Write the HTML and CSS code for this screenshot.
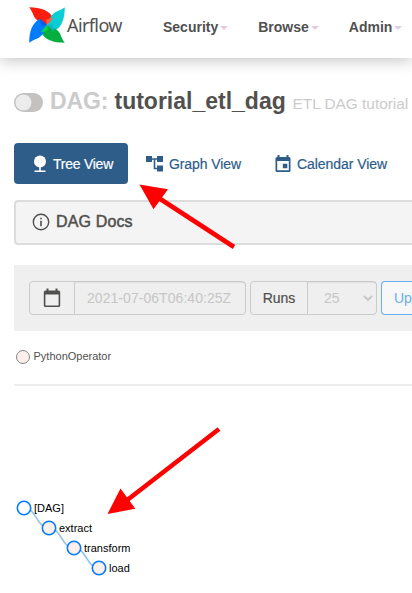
FILE: index.html
```html
<!DOCTYPE html>
<html lang="en">
<head>
<meta charset="utf-8">
<title>tutorial_etl_dag - Tree - Airflow</title>
<link rel="stylesheet" href="styles.css">
</head>
<body>
<header class="navbar">
  <a class="brand">
    <svg class="pinwheel" viewBox="0 0 36 36" width="36" height="36">
      <defs>
        <path id="blade" d="M.2.2C12 .4 20 3 24.300 11L18 18C12 15 8 14.500 5 9.500 3.500 5 1.500 2 .2.2z"/>
        <path id="fold" d="M18 18 17 13Q21 10.800 24.300 11z"/>
      </defs>
      <g fill="#ff1e0d"><use href="#blade"/></g>
      <g fill="#0bced5" transform="rotate(90 18 18)"><use href="#blade"/></g>
      <g fill="#04af40" transform="rotate(180 18 18)"><use href="#blade"/></g>
      <g fill="#017cff" transform="rotate(270 18 18)"><use href="#blade"/></g>
      <g fill="#ff6040"><use href="#fold"/></g>
      <g fill="#11b8c8" transform="rotate(90 18 18)"><use href="#fold"/></g>
      <g fill="#00d943" transform="rotate(180 18 18)"><use href="#fold"/></g>
      <g fill="#0160e8" transform="rotate(270 18 18)"><use href="#fold"/></g>
    </svg>
    <span class="brand-name">Airflow</span>
  </a>
  <nav class="menu">
    <a class="menu-item">Security<i class="caret"></i></a>
    <a class="menu-item">Browse<i class="caret"></i></a>
    <a class="menu-item">Admin<i class="caret"></i></a>
  </nav>
</header>
<main class="content">
  <div class="title-row">
    <span class="switch"></span>
    <h1 class="title"><span class="muted">DAG:</span><span class="dag-id">tutorial_etl_dag</span></h1>
    <small class="description">ETL DAG tutorial</small>
  </div>
  <div class="tabs">
    <a class="tab tab-active">
      <svg viewBox="0 0 12 18" width="12" height="18"><g fill="currentColor"><circle cx="6" cy="6.500" r="6"/><path d="M5.200 12h1.600v4H5.200zM.5 15.500h11v1.500H.5z"/></g></svg>
      <span>Tree View</span>
    </a>
    <a class="tab tab-graph">
      <svg viewBox="0 0 17 16" width="17" height="16"><path fill="currentColor" d="M0 0h6v6H0zM11 0h6v6h-6zM11 9.500h6v6h-6zM6 2.300h5v1.500H9.300v8h1.700v1.500H7.700V3.800H6z"/></svg>
      <span>Graph View</span>
    </a>
    <a class="tab tab-calendar">
      <svg viewBox="0 0 16 18" width="16" height="18"><path fill="currentColor" d="M2.500 0h2v2h7V0h2v2h.8Q15.500 2 15.500 3.500v12Q15.500 17 14 17H2Q.5 17 .5 15.500v-12Q.5 2 2 2h.5zM2.200 6v9.300h11.600V6zM7.800 8.800h4.500v4.500H7.800z" fill-rule="evenodd"/></svg>
      <span>Calendar View</span>
    </a>
  </div>
  <section class="docs">
    <svg viewBox="0 0 18 18" width="18" height="18"><circle cx="9" cy="9" r="7.700" fill="none" stroke="#51504f" stroke-width="1.400"/><path fill="#51504f" d="M8.200 4.700h1.600v1.600H8.200zM8.200 7.700h1.600v5.500H8.200z"/></svg>
    <span>DAG Docs</span>
  </section>
  <section class="filters">
    <div class="group group-date">
      <span class="addon">
        <svg viewBox="0 0 18 20" width="18" height="20"><path fill="#51504f" fill-rule="evenodd" d="M3.500.5h2v2h7v-2h2v2h1.200q1.500 0 1.500 1.500v13.500q0 1.500-1.500 1.500H2.300Q.8 19 .8 17.500V4q0-1.500 1.500-1.500h1.200zM2.400 6.500v11h13.200v-11z"/></svg>
      </span>
      <span class="field">2021-07-06T06:40:25Z</span>
    </div>
    <div class="group group-runs">
      <span class="addon">Runs</span>
      <span class="field select">25<svg viewBox="0 0 10 7" width="10" height="7"><path d="M1 1l4 4 4-4" fill="none" stroke="#c6c6c6" stroke-width="1.800"/></svg></span>
    </div>
    <span class="update">Up</span>
  </section>
  <div class="legend"><i class="legend-dot"></i><span>PythonOperator</span></div>
  <hr class="rule">
  <svg class="tree" viewBox="0 0 398 207" width="398" height="207">
    <g class="links">
      <path d="M10 122C22.500 122 22.500 142 35 142"/>
      <path d="M35 142C47.500 142 47.500 162 60 162"/>
      <path d="M60 162C72.500 162 72.500 182 85 182"/>
    </g>
    <g class="nodes">
      <circle class="root" cx="10" cy="122" r="6.700"/>
      <circle cx="35" cy="142" r="6.700"/>
      <circle cx="60" cy="162" r="6.700"/>
      <circle cx="85" cy="182" r="6.700"/>
    </g>
    <g class="labels">
      <text x="20" y="126">[DAG]</text>
      <text x="45" y="146">extract</text>
      <text x="70" y="166">transform</text>
      <text x="95" y="186">load</text>
    </g>
  </svg>
</main>
<svg class="arrows" viewBox="0 0 412 593" width="412" height="593">
  <path class="shaft" d="M234 247 158 197.500M219 429 126 501"/>
  <path class="head" d="M139.500 184.500 168 189.300 153.500 209.300zM107.500 514 120.500 488.500 135.300 508.800z"/>
</svg>
</body>
</html>
```
FILE: styles.css
```css
* { box-sizing: border-box; }
body {
  margin: 0;
  width: 412px;
  height: 593px;
  overflow: hidden;
  position: relative;
  background: #fff;
  color: #51504f;
  font: 14px/20px "Liberation Sans", Arial, sans-serif;
}
svg { flex: none; display: block; }
.navbar {
  display: flex;
  height: 58px;
  padding-left: 29px;
  box-shadow: 0 3px 14px rgba(0, 0, 0, .22);
}
.brand { display: flex; width: 134px; padding-top: 7px; }
.brand-name {
  margin: 6px 0 0 2px;
  font: 18px/24px "Noto Sans", sans-serif;
  letter-spacing: -.6px;
}
.menu { display: flex; gap: 30px; padding-top: 17px; font-weight: 700; }
.menu-item { display: flex; white-space: nowrap; }
.caret {
  margin: 9px 0 0 2px;
  height: 0;
  border: 4px solid transparent;
  border-top-color: #e3cbe6;
  border-bottom: 0;
}
.content { padding: 27px 0 0 14px; }
.title-row { display: flex; height: 34px; white-space: nowrap; }
.switch {
  flex: none;
  width: 29px;
  height: 19px;
  margin: 8px 7px 0 0;
  border-radius: 10px;
  background: radial-gradient(circle at 9.500px 9.500px, #ececec 7.600px, #c4c2c1 8.300px);
}
.title { margin: 0; display: flex; font: 700 23px/32px "Liberation Sans", sans-serif; }
.muted { width: 64.5px; color: #cbcbcb; letter-spacing: -.1px; }
.dag-id { width: 178px; }
.description { color: #cbcbcb; font-size: 15.4px; line-height: 37px; }
.tabs { display: flex; height: 41px; margin-top: 24px; color: #2e5d8a; }
.tab {
  display: flex;
  align-items: center;
  white-space: nowrap;
  -webkit-text-stroke: .2px currentColor;
}
.tab-active {
  width: 114px;
  padding-left: 20px;
  gap: 7px;
  border-radius: 4px;
  background: #2e5d8a;
  color: #fff;
  letter-spacing: -.25px;
}
.tab-graph { width: 129px; padding-left: 18px; gap: 6px; letter-spacing: -.1px; }
.tab-calendar { padding-left: 18px; gap: 6px; letter-spacing: -.05px; }
.docs {
  display: flex;
  align-items: center;
  gap: 6px;
  height: 45px;
  margin-top: 16px;
  padding: 0 0 2px 16px;
  border: 2px solid #dcdcdc;
  border-right: 0;
  border-radius: 4px 0 0 4px;
  background: #f4f4f4;
  font-size: 16px;
  letter-spacing: .15px;
  -webkit-text-stroke: .5px currentColor;
}
.filters {
  display: flex;
  gap: 4px;
  height: 66px;
  margin-top: 20px;
  padding: 16px 0 0 15px;
  background: #efefef;
}
.group {
  flex: none;
  display: flex;
  height: 34px;
  border: 1px solid #cbcbcb;
  border-radius: 4px;
}
.group-date { width: 217px; }
.group-runs { width: 127px; }
.addon {
  display: flex;
  justify-content: center;
  align-items: center;
  border-right: 1px solid #cbcbcb;
  -webkit-text-stroke: .2px currentColor;
}
.group-date .addon { width: 45px; }
.group-runs .addon { width: 57px; }
.field {
  flex: 1;
  display: flex;
  align-items: center;
  padding-left: 12px;
  color: #c6c6c6;
  letter-spacing: .05px;
  box-shadow: inset 0 1px 1px rgba(0, 0, 0, .07);
}
.select { justify-content: space-between; padding: 0 3px 0 16px; }
.update {
  flex: 1;
  height: 34px;
  padding-left: 12px;
  border: 1px solid #68afef;
  border-right: 0;
  border-radius: 4px 0 0 4px;
  background: #f7f7f7;
  color: #68afef;
  line-height: 33px;
}
.legend {
  display: flex;
  align-items: center;
  gap: 3.5px;
  height: 20px;
  margin-top: 15px;
  padding-left: 2px;
  font-size: 11px;
}
.legend-dot {
  width: 14px;
  height: 14px;
  margin-top: 2px;
  border: 1px solid #858585;
  border-radius: 50%;
  background: #ffefeb;
}
.rule { height: 2px; margin: 18px 0 0; border: 0; background: #eee; }
.links path { fill: none; stroke: #93c4ea; stroke-width: 1.5; }
.nodes circle { fill: #ffefeb; stroke: #017cff; stroke-width: 1.6; }
.nodes .root { fill: #fff; }
.labels { font-size: 11px; fill: #000; }
.arrows { position: absolute; top: 0; left: 0; }
.shaft { fill: none; stroke: #f00; stroke-width: 4.6; }
.head { fill: #f00; }
```
